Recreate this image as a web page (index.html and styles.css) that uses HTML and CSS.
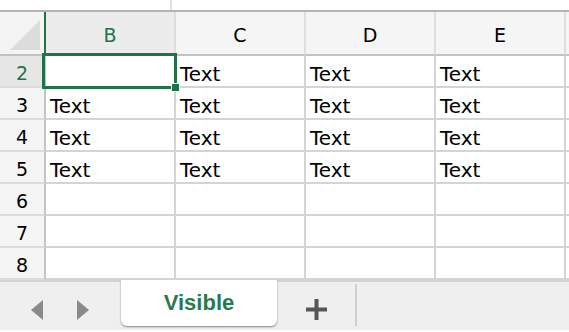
FILE: index.html
```html
<!DOCTYPE html>
<html lang="en">
<head>
  <meta charset="UTF-8">
  <meta name="viewport" content="width=device-width, initial-scale=1.0">
  <title>Sheet</title>
  <link rel="stylesheet" href="styles.css">
</head>
<body>
  <!-- Barra superior (fórmula) -->
  <div class="formula-strip">
    <div class="formula-name"></div>
    <div class="formula-input"></div>
  </div>

  <!-- Hoja de cálculo -->
  <div class="sheet">
    <div class="grid">
      <div class="corner"><span class="corner-tri"></span></div>
      <div class="col-head active">B</div>
      <div class="col-head">C</div>
      <div class="col-head">D</div>
      <div class="col-head">E</div>
      <div class="col-head tail"></div>

      <div class="row-head active">2</div>
      <div class="cell"></div>
      <div class="cell">Text</div>
      <div class="cell">Text</div>
      <div class="cell">Text</div>
      <div class="cell tail"></div>

      <div class="row-head">3</div>
      <div class="cell">Text</div>
      <div class="cell">Text</div>
      <div class="cell">Text</div>
      <div class="cell">Text</div>
      <div class="cell tail"></div>

      <div class="row-head">4</div>
      <div class="cell">Text</div>
      <div class="cell">Text</div>
      <div class="cell">Text</div>
      <div class="cell">Text</div>
      <div class="cell tail"></div>

      <div class="row-head">5</div>
      <div class="cell">Text</div>
      <div class="cell">Text</div>
      <div class="cell">Text</div>
      <div class="cell">Text</div>
      <div class="cell tail"></div>

      <div class="row-head">6</div>
      <div class="cell"></div>
      <div class="cell"></div>
      <div class="cell"></div>
      <div class="cell"></div>
      <div class="cell tail"></div>

      <div class="row-head">7</div>
      <div class="cell"></div>
      <div class="cell"></div>
      <div class="cell"></div>
      <div class="cell"></div>
      <div class="cell tail"></div>

      <div class="row-head">8</div>
      <div class="cell"></div>
      <div class="cell"></div>
      <div class="cell"></div>
      <div class="cell"></div>
      <div class="cell tail"></div>
    </div>

    <!-- Celda seleccionada -->
    <div class="selection"><span class="fill-handle"></span></div>
  </div>

  <!-- Pestañas de hojas -->
  <div class="tab-bar">
    <div class="tab-nav">
      <svg class="nav-arrow" width="16" height="22" viewBox="0 0 16 22"><path d="M14 1 L2 11 L14 21 Z" fill="#8a8a8a"/></svg>
      <svg class="nav-arrow" width="16" height="22" viewBox="0 0 16 22"><path d="M2 1 L14 11 L2 21 Z" fill="#8a8a8a"/></svg>
    </div>
    <div class="sheet-tab">Visible</div>
    <div class="add-sheet">
      <svg width="21" height="21" viewBox="0 0 21 21"><path d="M8.5 0h4v8.5h8.5v4h-8.5v8.5h-4v-8.5h-8.5v-4h8.5z" fill="#555"/></svg>
    </div>
    <div class="tab-sep"></div>
  </div>
</body>
</html>
```

FILE: styles.css
```css
/* Página */
body {
  margin: 0;
  width: 569px;
  height: 332px;
  overflow: hidden;
  background: #ffffff;
  font-family: "DejaVu Sans", Verdana, sans-serif;
  color: #000000;
}

/* Barra de fórmula */
.formula-strip {
  display: flex;
  height: 10px;
  border-bottom: 2px solid #b4b4b4;
}
.formula-name {
  width: 170px;
  border-right: 2px solid #e2e2e2;
}
.formula-input {
  flex: 1;
}

/* Hoja */
.sheet {
  position: relative;
}
.grid {
  display: grid;
  grid-template-columns: 46px repeat(4, 130px) 1fr;
  grid-template-rows: 44px repeat(7, 32px);
}
.grid > div {
  box-sizing: border-box;
  border-right: 2px solid #d4d4d4;
  border-bottom: 2px solid #d4d4d4;
}

/* Encabezados */
.corner {
  position: relative;
  background: #f4f4f4;
  border-right-color: #217346 !important;
  border-bottom-color: #c2c2c2 !important;
}
.corner-tri {
  position: absolute;
  right: 4px;
  bottom: 4px;
  width: 30px;
  height: 30px;
  background: #dcdcdc;
  clip-path: polygon(100% 0, 100% 100%, 0 100%);
}
.col-head {
  display: flex;
  align-items: center;
  justify-content: center;
  padding-top: 4px;
  background: #f5f5f5;
  font-size: 19px;
  border-right-color: #dedede !important;
  border-bottom-color: #c2c2c2 !important;
}
.col-head.active {
  background: #ececec;
  color: #217346;
}
.row-head {
  display: flex;
  align-items: center;
  justify-content: center;
  padding-top: 3px;
  background: #f5f5f5;
  font-size: 19px;
  border-right-color: #c4c4c4 !important;
  border-bottom-color: #dcdcdc !important;
}
.row-head.active {
  background: #e6e6e6;
  color: #217346;
}

/* Celdas */
.cell {
  padding: 5px 0 0 4px;
  font-size: 20px;
  line-height: 26px;
  white-space: nowrap;
  overflow: hidden;
}
.tail {
  border-right: none !important;
}

/* Selección */
.selection {
  position: absolute;
  left: 42px;
  top: 41px;
  width: 135px;
  height: 36px;
  box-sizing: border-box;
  border: 3px solid #217346;
  pointer-events: none;
}
.fill-handle {
  position: absolute;
  right: -6px;
  bottom: -6px;
  width: 7px;
  height: 7px;
  background: #217346;
  border: 1px solid #ffffff;
}

/* Pestañas */
.tab-bar {
  display: flex;
  align-items: flex-start;
  height: 50px;
  box-sizing: border-box;
  background: #efefef;
  border-top: 2px solid #d2d2d2;
}
.tab-nav {
  display: flex;
  gap: 30px;
  width: 121px;
  padding: 17px 0 0 29px;
  box-sizing: border-box;
}
.sheet-tab {
  width: 156px;
  height: 46px;
  box-sizing: border-box;
  margin-top: -2px;
  padding-top: 10px;
  background: #ffffff;
  border-radius: 0 0 6px 6px;
  box-shadow: 0 1px 2px rgba(0, 0, 0, 0.45);
  text-align: center;
  font-family: "Liberation Sans", Arial, sans-serif;
  font-weight: bold;
  font-size: 22px;
  color: #2b7a4b;
}
.add-sheet {
  display: flex;
  justify-content: center;
  width: 78px;
  padding-top: 17px;
}
.tab-sep {
  width: 2px;
  height: 42px;
  margin-top: 2px;
  background: #d0d0d0;
}
```
